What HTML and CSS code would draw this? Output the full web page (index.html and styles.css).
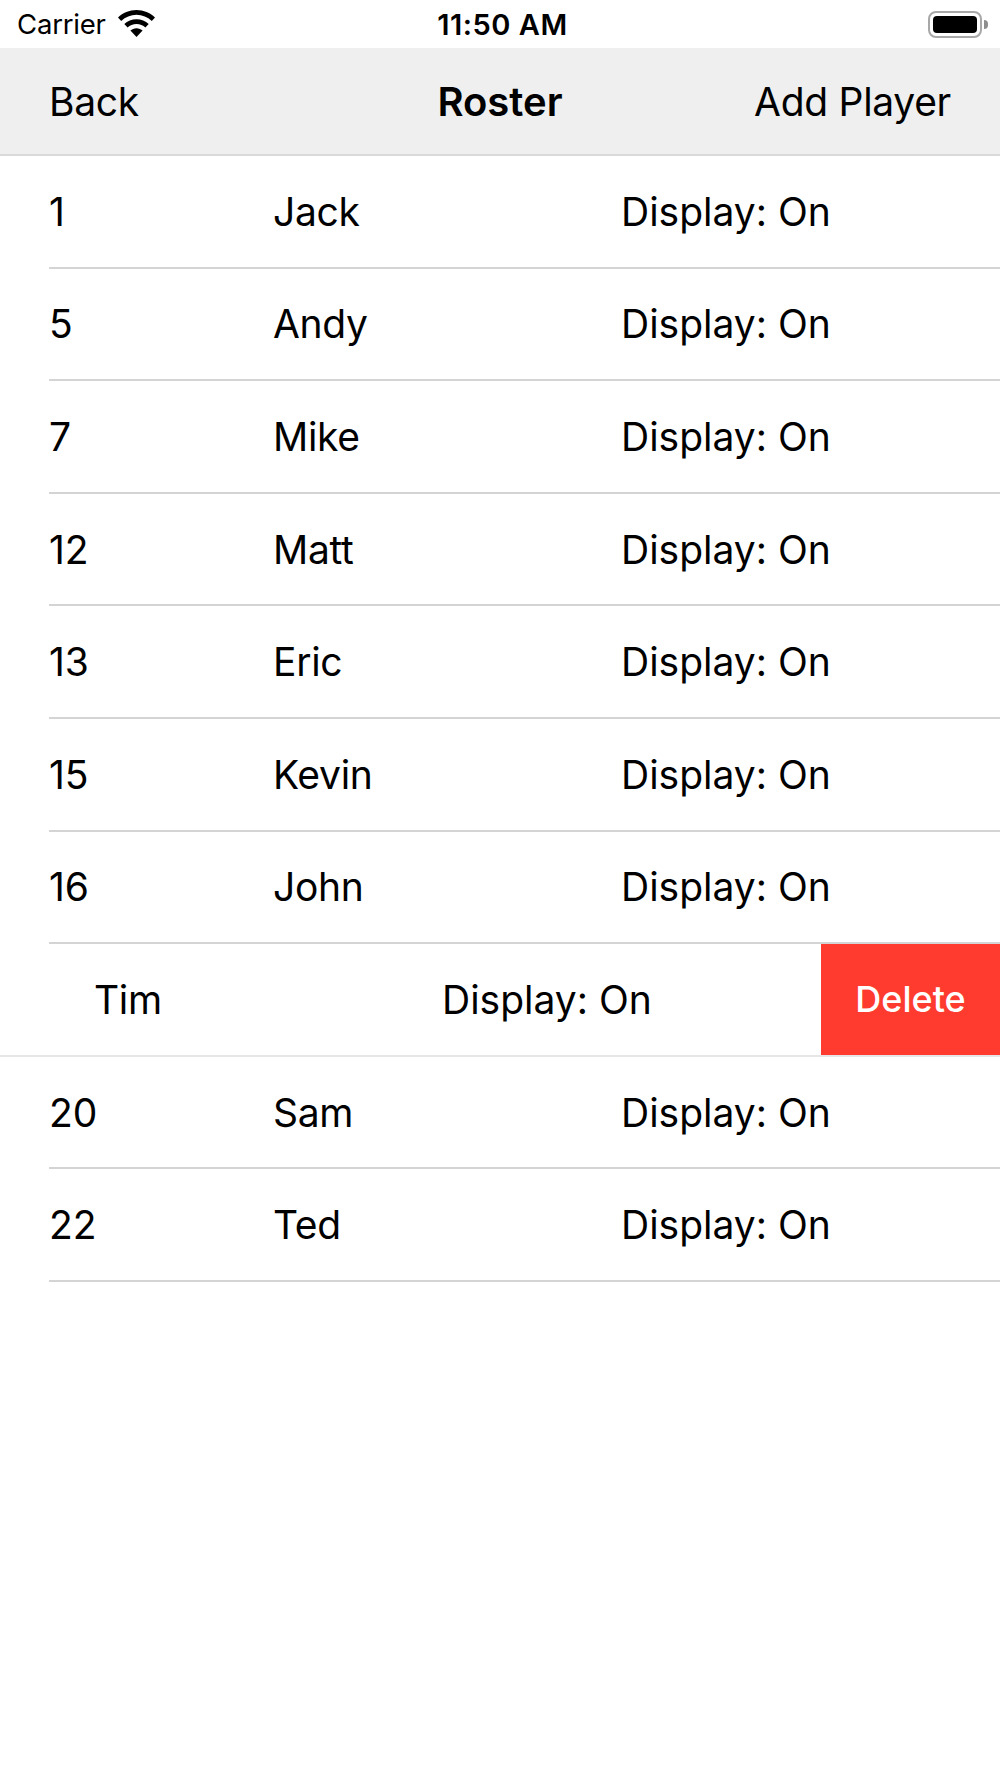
FILE: index.html
```html
<!DOCTYPE html>
<html lang="en">
<head>
    <meta charset="UTF-8">
    <meta name="viewport" content="width=device-width, initial-scale=1.0">
    <title>Roster</title>
    <link rel="stylesheet" href="styles.css">
</head>
<body>
    <div class="status-bar">
        <div class="status-left">
            <span class="carrier">Carrier</span>
            <svg class="wifi" width="37" height="27" viewBox="0 0 37 27">
                <path d="M18.5 0C11.3 0 5 2.900 0 7.400l3.200 3.500C7.400 7.100 12.700 4.800 18.500 4.800s11.100 2.300 15.300 6.100L37 7.400C32 2.900 25.700 0 18.500 0z" fill="#000"/>
                <path d="M18.500 9.200c-4.700 0-9 1.800-12.200 4.800l3.300 3.500c2.300-2.200 5.400-3.500 8.900-3.500s6.600 1.300 8.900 3.500l3.300-3.500c-3.200-3-7.500-4.800-12.200-4.800z" fill="#000"/>
                <path d="M18.500 18.200c-2.400 0-4.500.9-6.100 2.400l6.100 6.400 6.100-6.400c-1.600-1.500-3.700-2.400-6.100-2.400z" fill="#000"/>
            </svg>
        </div>
        <span class="clock">11:50 AM</span>
        <div class="status-right">
            <div class="battery"><div class="battery-level"></div></div>
            <div class="battery-cap"></div>
        </div>
    </div>

    <div class="nav-bar">
        <span class="nav-btn">Back</span>
        <span class="nav-title">Roster</span>
        <span class="nav-btn">Add Player</span>
    </div>

    <div class="roster">
        <div class="row"><span>1</span><span class="name">Jack</span><span>Display: On</span></div>
        <div class="row"><span>5</span><span class="name">Andy</span><span>Display: On</span></div>
        <div class="row"><span>7</span><span class="name">Mike</span><span>Display: On</span></div>
        <div class="row"><span>12</span><span class="name">Matt</span><span>Display: On</span></div>
        <div class="row"><span>13</span><span class="name">Eric</span><span>Display: On</span></div>
        <div class="row"><span>15</span><span class="name">Kevin</span><span>Display: On</span></div>
        <div class="row"><span>16</span><span class="name">John</span><span>Display: On</span></div>
        <div class="row swiped">
            <span class="name">Tim</span>
            <span>Display: On</span>
            <div class="delete-btn">Delete</div>
        </div>
        <div class="row"><span>20</span><span class="name">Sam</span><span>Display: On</span></div>
        <div class="row"><span>22</span><span class="name">Ted</span><span>Display: On</span></div>
    </div>
</body>
</html>
```

FILE: styles.css
```css
* {
    margin: 0;
    padding: 0;
    box-sizing: border-box;
}

body {
    font-family: Inter, "Liberation Sans", sans-serif;
    background: #ffffff;
    color: #000000;
    overflow-x: hidden;
}

.status-bar {
    height: 48px;
    padding: 0 12px 0 17px;
    display: grid;
    grid-template-columns: 1fr auto 1fr;
    align-items: center;
}

.status-left {
    display: flex;
    align-items: center;
    gap: 12px;
}

.carrier {
    font-size: 27.5px;
    letter-spacing: -0.2px;
}

.wifi {
    margin-top: -1px;
}

.clock {
    font-size: 29px;
    font-weight: 600;
    letter-spacing: 0.5px;
}

.status-right {
    display: flex;
    align-items: center;
    justify-content: flex-end;
}

.battery {
    width: 54px;
    height: 27px;
    padding: 3px;
    border: 2px solid #a8a8a8;
    border-radius: 8px;
}

.battery-level {
    height: 100%;
    background: #000000;
    border-radius: 4px;
}

.battery-cap {
    width: 4px;
    height: 9px;
    margin-left: 2px;
    background: #8e8e8e;
    border-radius: 0 5px 5px 0;
}

.nav-bar {
    height: 108px;
    padding: 0 49px;
    background: #efefef;
    border-bottom: 2px solid #d9d9d9;
    display: grid;
    grid-template-columns: 1fr auto 1fr;
    align-items: center;
    font-size: 39px;
}

.nav-btn {
    letter-spacing: -0.3px;
}

.nav-btn:last-child {
    text-align: right;
}

.nav-title {
    font-size: 40px;
    font-weight: 600;
}

.row {
    height: 112.6px;
    margin-left: 49px;
    border-bottom: 2px solid #d4d4d4;
    display: grid;
    grid-template-columns: 225px 347px 1fr;
    align-items: center;
    font-size: 39px;
}

.name {
    margin-left: -1px;
    letter-spacing: -0.3px;
}

.row.swiped {
    margin-left: 0;
    padding-left: 95px;
    grid-template-columns: 347px 1fr 179px;
    border-bottom-color: #e6e6e6;
}

.delete-btn {
    height: 100%;
    background: #ff3b30;
    color: #ffffff;
    font-size: 36px;
    font-weight: 500;
    display: flex;
    align-items: center;
    justify-content: center;
}
```
